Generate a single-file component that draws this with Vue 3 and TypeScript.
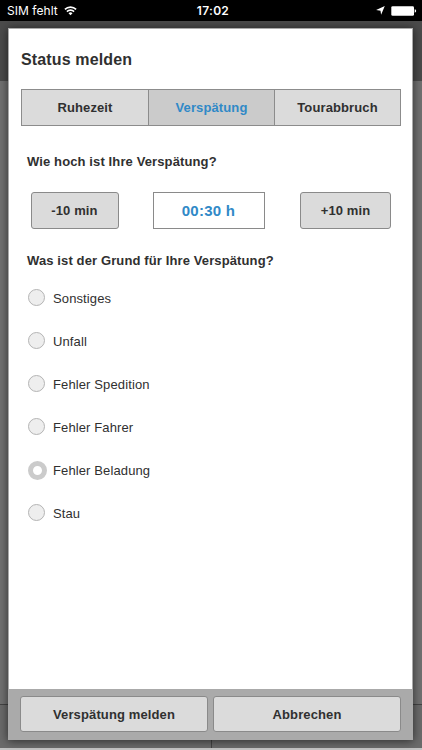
<script setup lang="ts">
import { ref, computed } from 'vue'

const tabs: string[] = ['Ruhezeit', 'Verspätung', 'Tourabbruch']
const activeTab = ref('Verspätung')

const reasons: string[] = [
  'Sonstiges',
  'Unfall',
  'Fehler Spedition',
  'Fehler Fahrer',
  'Fehler Beladung',
  'Stau',
]
const selectedReason = ref('Fehler Beladung')

const minutes = ref(30)
const delay = computed(() => {
  const h = String(Math.floor(minutes.value / 60)).padStart(2, '0')
  const m = String(minutes.value % 60).padStart(2, '0')
  return `${h}:${m} h`
})

function change(step: number): void {
  minutes.value = Math.max(0, minutes.value + step)
}
</script>

<template>
  <div class="screen">
    <header class="status-bar">
      <div class="carrier">
        <span>SIM fehlt</span>
        <svg class="wifi" width="13" height="10" viewBox="0 0 13 10">
          <path d="M0.9 3.4a8 8 0 0 1 11.2 0M2.9 5.6a5.1 5.1 0 0 1 7.2 0" fill="none" stroke="#fff" stroke-width="1.6" />
          <path d="M6.5 9.3L4.5 7.3a2.8 2.8 0 0 1 4 0z" fill="#fff" />
        </svg>
      </div>
      <span class="clock">17:02</span>
      <div class="indicators">
        <svg width="9" height="9" viewBox="0 0 9 9">
          <path d="M8.8 0.1L5.1 8.8L4.5 4.7L0.1 4.1z" fill="#fff" />
        </svg>
        <svg width="26" height="10" viewBox="0 0 26 10">
          <rect x="0.3" y="0.2" width="22.7" height="9.6" rx="1.4" fill="#fff" />
          <path d="M23.7 3.3q1.5 0.3 1.5 1.7t-1.5 1.7z" fill="#fff" />
        </svg>
      </div>
    </header>

    <div class="backdrop">
      <div class="backdrop-header"></div>
      <div class="backdrop-content"></div>
      <div class="backdrop-footer"><i></i><i></i></div>
    </div>

    <section class="dialog">
      <div class="body">
        <h1>Status melden</h1>
        <div class="tabs">
          <button v-for="tab in tabs" :key="tab" :class="{ active: tab === activeTab }" @click="activeTab = tab">
            {{ tab }}
          </button>
        </div>
        <h2>Wie hoch ist Ihre Verspätung?</h2>
        <div class="stepper">
          <button class="btn minus" @click="change(-10)">-10 min</button>
          <output class="value">{{ delay }}</output>
          <button class="btn plus" @click="change(10)">+10 min</button>
        </div>
        <h2 class="reason-title">Was ist der Grund für Ihre Verspätung?</h2>
        <ul class="reasons">
          <li v-for="reason in reasons" :key="reason" @click="selectedReason = reason">
            <span class="radio" :class="{ checked: reason === selectedReason }"></span>
            <span>{{ reason }}</span>
          </li>
        </ul>
      </div>
      <footer class="actions">
        <button class="btn">Verspätung melden</button>
        <button class="btn">Abbrechen</button>
      </footer>
    </section>
  </div>
</template>

<style>
body {
  margin: 0;
  background: #6f6f6f;
}
</style>

<style scoped>
* {
  box-sizing: border-box;
}

.screen {
  position: relative;
  width: 422px;
  height: 750px;
  overflow: hidden;
  display: flex;
  flex-direction: column;
  font-family: 'Liberation Sans', Arial, sans-serif;
  font-size: 13px;
  letter-spacing: 0.12px;
  color: #303030;
}

button {
  font: inherit;
  font-weight: bold;
  letter-spacing: inherit;
  color: inherit;
  padding: 0;
  margin: 0;
}

.status-bar {
  height: 21px;
  flex: none;
  display: grid;
  grid-template-columns: 1fr auto 1fr;
  align-items: center;
  padding: 0 5px 0 7px;
  background: #000;
  color: #fff;
  font-family: Inter, sans-serif;
  font-size: 12px;
  letter-spacing: 0.05px;
}

.carrier,
.indicators {
  display: flex;
  align-items: center;
}

.carrier {
  gap: 6px;
}

.indicators {
  justify-content: flex-end;
  gap: 6px;
}

.clock {
  padding-left: 2px;
  font-weight: 600;
  letter-spacing: 0.3px;
}

.backdrop {
  flex: 1;
  display: flex;
  flex-direction: column;
  border-bottom: 2px solid #c4c4c4;
}

.backdrop-header {
  height: 60px;
  background: #4b4b4b;
}

.backdrop-content {
  flex: 1;
  background: #717171;
}

.backdrop-footer {
  height: 44px;
  display: flex;
  border-top: 1px solid #444;
  background: #6b6b6b;
}

.backdrop-footer i {
  flex: 1;
}

.backdrop-footer i + i {
  border-left: 1px solid #444;
}

.dialog {
  position: absolute;
  left: 8px;
  top: 28px;
  width: 405px;
  height: 712px;
  display: flex;
  flex-direction: column;
  border: 1px solid #aaa;
  background: #fff;
  box-shadow: 0 1px 9px rgba(0, 0, 0, 0.6);
}

.body {
  flex: 1;
  padding: 21px 11px 0 12px;
}

h1 {
  margin: 0;
  font-size: 16px;
  line-height: 20px;
  letter-spacing: 0.14px;
}

.tabs {
  height: 37px;
  margin-top: 19px;
  display: grid;
  grid-template-columns: 126px 126px 1fr;
  border: 1px solid #8c8c8c;
}

.tabs button {
  border: 0;
  background: #dbdbdb;
}

.tabs button + button {
  border-left: 1px solid #8c8c8c;
}

.tabs button.active {
  background: #cbcbcb;
  color: #3089c7;
}

h2 {
  margin: 26px 0 0 6px;
  font-size: 13px;
  line-height: 20px;
}

.stepper {
  display: grid;
  grid-template-columns: 88px 112px 91px;
  column-gap: 0;
  justify-content: space-between;
  height: 37px;
  margin: 20px 10px 0 10px;
}

.btn {
  border: 1px solid #8a8a8a;
  border-radius: 3px;
  background: #dbdbdb;
}

.minus {
  padding-right: 1px;
}

.value {
  display: flex;
  align-items: center;
  justify-content: center;
  margin: 0 1px 0 -1px;
  border: 1px solid #8a8a8a;
  color: #3089c7;
  font-size: 15px;
  font-weight: bold;
  letter-spacing: 0.25px;
}

.reason-title {
  margin-top: 22px;
}

.reasons {
  list-style: none;
  margin: 6px 0 0 7px;
  padding: 0;
}

.reasons li {
  height: 43px;
  display: flex;
  align-items: center;
  gap: 8px;
}

.radio {
  width: 17px;
  height: 17px;
  margin-top: -3px;
  border: 1px solid #b4b4b4;
  border-radius: 50%;
  background: #eee;
}

.radio.checked {
  width: 19px;
  height: 19px;
  margin-top: 0;
  margin-right: -2px;
  border: 5px solid #cbcbcb;
  background: #fff;
}

.actions {
  height: 50px;
  display: grid;
  grid-template-columns: 1fr 1fr;
  gap: 5px;
  padding: 7px 11px;
  background: #aaa;
}
</style>
